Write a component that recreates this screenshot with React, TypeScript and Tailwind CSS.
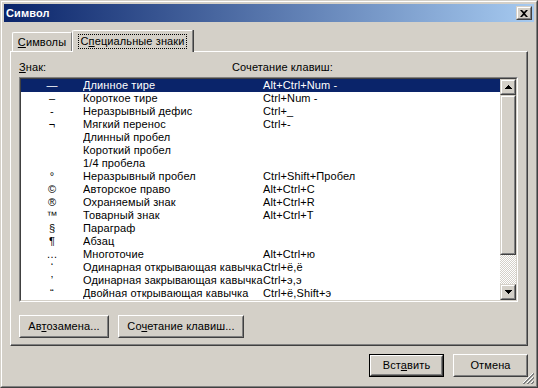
const rows = [
  { sym: "—", name: "Длинное тире", keys: "Alt+Ctrl+Num -" },
  { sym: "–", name: "Короткое тире", keys: "Ctrl+Num -" },
  { sym: "-", name: "Неразрывный дефис", keys: "Ctrl+_" },
  { sym: "¬", name: "Мягкий перенос", keys: "Ctrl+-" },
  { sym: "", name: "Длинный пробел", keys: "" },
  { sym: "", name: "Короткий пробел", keys: "" },
  { sym: "", name: "1/4 пробела", keys: "" },
  { sym: "°", name: "Неразрывный пробел", keys: "Ctrl+Shift+Пробел" },
  { sym: "©", name: "Авторское право", keys: "Alt+Ctrl+C" },
  { sym: "®", name: "Охраняемый знак", keys: "Alt+Ctrl+R" },
  { sym: "™", name: "Товарный знак", keys: "Alt+Ctrl+T" },
  { sym: "§", name: "Параграф", keys: "" },
  { sym: "¶", name: "Абзац", keys: "" },
  { sym: "…", name: "Многоточие", keys: "Alt+Ctrl+ю" },
  { sym: "‘", name: "Одинарная открывающая кавычка", keys: "Ctrl+ё,ё" },
  { sym: "’", name: "Одинарная закрывающая кавычка", keys: "Ctrl+э,э" },
  { sym: "“", name: "Двойная открывающая кавычка", keys: "Ctrl+ё,Shift+э" },
];

function Button({ children, w, isDefault }: { children: React.ReactNode; w: string; isDefault?: boolean }) {
  const inner = (
    <div className="h-full border border-t-white border-l-white border-r-[#404040] border-b-[#404040]">
      <div className="flex h-full items-center justify-center border border-t-[#d4d0c8] border-l-[#d4d0c8] border-r-[#808080] border-b-[#808080]">
        {children}
      </div>
    </div>
  );
  if (isDefault) {
    return <div className={`h-[23px] border border-black ${w}`}>{inner}</div>;
  }
  return <div className={`h-[23px] ${w}`}>{inner}</div>;
}

function Raised({ className, children }: { className: string; children?: React.ReactNode }) {
  return (
    <div className={`border border-t-[#d4d0c8] border-l-[#d4d0c8] border-r-[#404040] border-b-[#404040] ${className}`}>
      <div className="flex h-full items-center justify-center border border-t-white border-l-white border-r-[#808080] border-b-[#808080] bg-[#d4d0c8]">
        {children}
      </div>
    </div>
  );
}

function Arrow({ up }: { up?: boolean }) {
  return (
    <svg width="7" height="4" viewBox="0 0 7 4">
      {up ? <path d="M3 0h1v1h1v1h1v1h1v1H0V3h1V2h1V1h1z" fill="#000" /> : <path d="M0 0h7v1H6v1H5v1H4v1H3V3H2V2H1V1H0z" fill="#000" />}
    </svg>
  );
}

export default function App() {
  return (
    <div className="h-[388px] w-[538px] border border-t-[#d4d0c8] border-l-[#d4d0c8] border-r-[#404040] border-b-[#404040] bg-[#d4d0c8] text-[11px] leading-[13px] tracking-[0.11px] text-black font-['Liberation_Sans',Arial,sans-serif]">
      <div className="flex h-full flex-col border border-t-white border-l-white border-r-[#808080] border-b-[#808080] p-[2px]">
        {/* title bar */}
        <div className="flex h-[18px] items-center justify-between bg-[linear-gradient(to_right,#0a246a,#a6caf0)] pl-[2px] pr-[2px]">
          <span className="font-bold text-white">Символ</span>
          <Raised className="h-[14px] w-[16px]">
            <svg width="8" height="7" viewBox="0 0 8 7">
              <path d="M0 0h2l2 2 2-2h2L5 3.5 8 7H6L4 5 2 7H0l3-3.5z" fill="#000" />
            </svg>
          </Raised>
        </div>

        {/* tabs */}
        <div className="mt-[8px] flex h-[21px] items-end pl-[8px]">
          <div className="flex h-[19px] w-[60px] items-center justify-center rounded-tl-[2px] border-l border-t border-l-white border-t-white border-r border-r-[#808080] shadow-[1px_0_0_#404040]">
            <span><span className="underline underline-offset-[1px]">С</span>имволы</span>
          </div>
          <div className="relative z-10 -mb-px flex h-[22px] w-[121px] items-start justify-center rounded-tl-[2px] border-l border-t border-l-white border-t-white border-r border-r-[#808080] bg-[#d4d0c8] pt-[3px] shadow-[1px_0_0_#404040]">
            <span className="border border-dotted border-black px-[2px]">
              С<span className="underline underline-offset-[1px]">п</span>ециальные знаки
            </span>
          </div>
        </div>

        {/* panel */}
        <div className="ml-[6px] h-[295px] w-[518px] border border-t-white border-l-white border-r-[#404040] border-b-[#404040]">
          <div className="h-full border-r border-b border-r-[#808080] border-b-[#808080] pl-[8px] pt-[9px]">
            <div className="flex h-[13px]">
              <span className="w-[213px]"><span className="underline underline-offset-[1px]">З</span>нак:</span>
              <span>Сочетание клавиш:</span>
            </div>
            <div className="mt-[3px] h-[225px] w-[499px] border border-t-[#808080] border-l-[#808080] border-r-white border-b-white">
              <div className="flex h-full border border-t-[#404040] border-l-[#404040] border-r-[#d4d0c8] border-b-[#d4d0c8] bg-white">
                <div className="flex-1 overflow-hidden">
                  {rows.map((r, i) => (
                    <div
                      key={i}
                      className={`flex h-[13px] whitespace-nowrap ${i === 0 ? "bg-[#0a246a] text-white" : ""}`}
                    >
                      <span className="w-[62px] text-center">{r.sym}</span>
                      <span className="w-[180px] overflow-hidden text-ellipsis">{r.name}</span>
                      <span>{r.keys}</span>
                    </div>
                  ))}
                </div>
                <div className="flex w-[16px] flex-col">
                  <Raised className="h-[16px] w-[16px]">
                    <Arrow up />
                  </Raised>
                  <Raised className="h-[160px] w-[16px]" />
                  <div className="flex-1 bg-[conic-gradient(#ffffff_25%,#d4d0c8_0_50%,#ffffff_0_75%,#d4d0c8_0)] bg-[length:2px_2px]" />
                  <Raised className="h-[16px] w-[16px]">
                    <Arrow />
                  </Raised>
                </div>
              </div>
            </div>
            <div className="mt-[13px] flex gap-[9px]">
              <Button w="w-[90px]">
                <span>Ав<span className="underline underline-offset-[1px]">т</span>озамена...</span>
              </Button>
              <Button w="w-[126px]">
                <span>Со<span className="underline underline-offset-[1px]">ч</span>етание клавиш...</span>
              </Button>
            </div>
          </div>
        </div>

        {/* bottom buttons */}
        <div className="relative flex flex-1 items-start justify-end gap-[9px] pr-[6px] pt-[8px]">
          <Button w="w-[75px]" isDefault>
            <span>Вст<span className="underline underline-offset-[1px]">а</span>вить</span>
          </Button>
          <Button w="w-[75px]">
            <span>Отмена</span>
          </Button>
          <svg className="absolute bottom-0 right-0" width="12" height="12" viewBox="0 0 12 12">
            <path d="M11 1L1 11M11 5L5 11M11 9L9 11" stroke="#fff" strokeWidth="1" />
            <path d="M12 1L1 12M12 2L2 12M12 5L5 12M12 6L6 12M12 9L9 12M12 10L10 12" stroke="#808080" strokeWidth="1" />
          </svg>
        </div>
      </div>
    </div>
  );
}
